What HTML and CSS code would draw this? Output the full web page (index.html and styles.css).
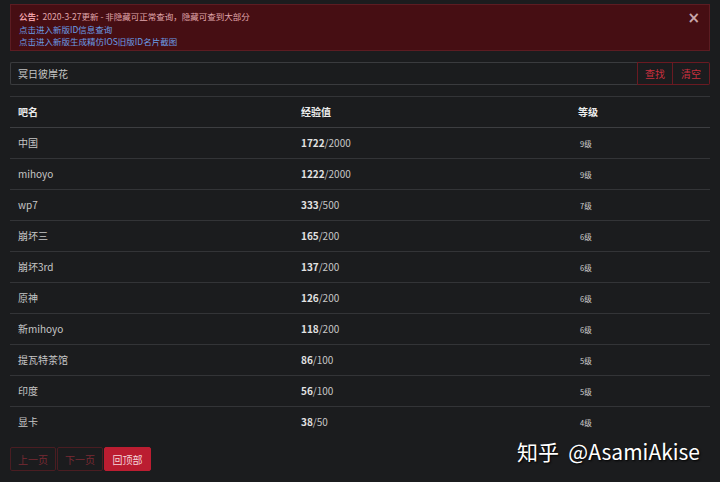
FILE: index.html
```html
<!DOCTYPE html>
<html lang="zh">
<head>
<meta charset="utf-8">
<link rel="stylesheet" href="styles.css">
</head>
<body>
<div class="page">
  <div class="alert">
    <div class="alert-body">
      <div><b>公告:</b>&nbsp;&nbsp;2020-3-27更新 - 非隐藏可正常查询，隐藏可查到大部分</div>
      <div><a class="link">点击进入新版ID信息查询</a></div>
      <div><a class="link">点击进入新版生成精仿IOS旧版ID名片截图</a></div>
    </div>
    <span class="close">×</span>
  </div>
  <div class="search">
    <div class="input">冥日彼岸花</div>
    <button class="obtn">查找</button>
    <button class="obtn">清空</button>
  </div>
  <div class="tbl">
    <div class="row head"><span>吧名</span><span>经验值</span><span>等级</span></div>
    <div class="row"><span>中国</span><span><b>1722</b>/2000</span><span class="lv">9级</span></div>
    <div class="row"><span>mihoyo</span><span><b>1222</b>/2000</span><span class="lv">9级</span></div>
    <div class="row"><span>wp7</span><span><b>333</b>/500</span><span class="lv">7级</span></div>
    <div class="row"><span>崩坏三</span><span><b>165</b>/200</span><span class="lv">6级</span></div>
    <div class="row"><span>崩坏3rd</span><span><b>137</b>/200</span><span class="lv">6级</span></div>
    <div class="row"><span>原神</span><span><b>126</b>/200</span><span class="lv">6级</span></div>
    <div class="row"><span>新mihoyo</span><span><b>118</b>/200</span><span class="lv">6级</span></div>
    <div class="row"><span>提瓦特茶馆</span><span><b>86</b>/100</span><span class="lv">5级</span></div>
    <div class="row"><span>印度</span><span><b>56</b>/100</span><span class="lv">5级</span></div>
    <div class="row"><span>显卡</span><span><b>38</b>/50</span><span class="lv">4级</span></div>
  </div>
  <div class="footer">
    <div class="pager">
      <button class="pbtn">上一页</button>
      <button class="pbtn">下一页</button>
      <button class="pbtn solid">回顶部</button>
    </div>
    <div class="mark">知乎&nbsp;&nbsp;@AsamiAkise</div>
  </div>
</div>
</body>
</html>
```

FILE: styles.css
```css
html, body {
  margin: 0;
  padding: 0;
  background: #1b1c1e;
}
body {
  font-family: "Noto Sans CJK SC", "Noto Sans", sans-serif;
  color: #cfcfcf;
}
.page {
  padding: 4px 10px 0 10px;
  width: 700px;
}
.alert {
  position: relative;
  background: #460e13;
  border: 1px solid #5c1c22;
  box-sizing: border-box;
  height: 47px;
  padding: 5px 8px;
  font-size: 8.5px;
  line-height: 12.5px;
  color: #e0a6ac;
}
.alert b {
  color: #f0a0a8;
}
.link {
  color: #6a9de6;
}
.close {
  position: absolute;
  right: 9px;
  top: 5px;
  font-size: 15px;
  line-height: 16px;
  font-weight: bold;
  color: #c8a7aa;
  font-family: "DejaVu Sans", sans-serif;
}
.search {
  display: flex;
  margin-top: 11px;
  height: 23px;
}
.input {
  flex: 1;
  border: 1px solid #3a3b3e;
  border-right: none;
  border-radius: 2px 0 0 2px;
  font-size: 10px;
  line-height: 21px;
  padding-left: 7px;
  color: #c4c4c4;
}
.obtn {
  background: transparent;
  border: 1px solid #6a1a22;
  color: #c9303f;
  font-family: inherit;
  font-size: 10px;
  padding: 0;
  width: 36px;
  margin: 0;
}
.obtn + .obtn {
  border-left: none;
  width: 37px;
  border-radius: 0 2px 2px 0;
}
.tbl {
  margin-top: 11px;
  font-size: 10px;
  line-height: 14px;
}
.row {
  display: grid;
  grid-template-columns: 283px 277px 1fr;
  align-items: center;
  height: 30px;
  border-top: 1px solid #333437;
  color: #c6c6c6;
}
.row > span {
  padding-left: 8px;
}
.row.head {
  color: #ececec;
  font-weight: bold;
}
.row.head + .row {
  border-top: 1px solid #3d3e41;
}
.row b {
  color: #e2e2e2;
}
.row .lv {
  font-size: 7.5px;
  padding-left: 10px;
  padding-top: 2px;
  color: #d0d0d0;
}
.footer {
  display: flex;
  justify-content: space-between;
  align-items: flex-start;
  margin-top: 10px;
}
.pager {
  display: flex;
}
.pbtn {
  background: transparent;
  border: 1px solid #4a1d22;
  color: #7a2a33;
  font-family: inherit;
  font-size: 10px;
  width: 46px;
  height: 24px;
  padding: 0;
  margin: 0 1px 0 0;
  border-radius: 2px;
}
.pbtn.solid {
  background: #bb1d31;
  border-color: #bb1d31;
  color: #f4d6da;
  width: 47px;
}
.mark {
  font-size: 21px;
  line-height: 26px;
  color: #ffffff;
  margin-right: 10px;
  margin-top: -9px;
  text-shadow: 1px 1px 2px #000;
}
```
